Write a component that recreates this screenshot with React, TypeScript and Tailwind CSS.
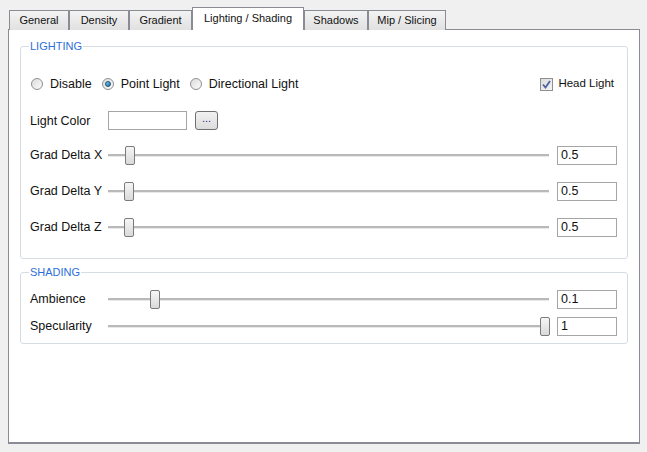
const tabs = [
  { label: "General", w: 60 },
  { label: "Density", w: 60 },
  { label: "Gradient", w: 63 },
  { label: "Lighting / Shading", w: 112, active: true },
  { label: "Shadows", w: 64 },
  { label: "Mip / Slicing", w: 78 },
];

function Radio({ checked, label }: { checked?: boolean; label: string }) {
  return (
    <label className="flex items-center gap-[7px]">
      <span className="flex h-[12px] w-[12px] items-center justify-center rounded-full border border-[#8f8f8f] bg-gradient-to-br from-[#dcdcdc] to-[#fbfbfb]">
        {checked && (
          <span className="h-[6px] w-[6px] rounded-full border border-[#1b4f72] bg-gradient-to-br from-[#7fd0f5] to-[#1a6fa8]" />
        )}
      </span>
      <span>{label}</span>
    </label>
  );
}

function Slider({ pos }: { pos: number }) {
  return (
    <div className="relative h-[19px] flex-1">
      <div className="absolute left-0 right-0 top-[8px] h-[3px] border-t-2 border-[#b9b9b9] bg-[#e8e8e8]" />
      <div
        className="absolute top-0 h-[19px] w-[10px] rounded-[2px] border border-[#7b7b7b] bg-gradient-to-b from-[#f6f6f6] to-[#d9d9d9]"
        style={{ left: pos }}
      />
    </div>
  );
}

function ValueBox({ value }: { value: string }) {
  return (
    <div className="flex h-[19px] w-[60px] items-center border border-[#a5a5a5] bg-white pl-[3px]">
      {value}
    </div>
  );
}

function SliderRow({ label, pos, value, h }: { label: string; pos: number; value: string; h: string }) {
  return (
    <div className={`flex items-center pl-[9px] pr-[10px] ${h}`}>
      <span className="w-[78px]">{label}</span>
      <Slider pos={pos} />
      <span className="w-[8px]" />
      <ValueBox value={value} />
    </div>
  );
}

function GroupBox({ title, className, children }: { title: string; className: string; children: React.ReactNode }) {
  return (
    <div className={`relative mx-[11px] rounded-[3px] border border-[#d5dde3] ${className}`}>
      <span className="absolute left-[8px] top-[-8px] bg-white px-[1px] text-[11px] leading-[14px] text-[#2c6ed8]">
        {title}
      </span>
      {children}
    </div>
  );
}

export default function App() {
  return (
    <div
      className="h-[452px] w-[647px] bg-[#f0f0f0] pl-[8px] pt-[7px] text-[12.5px] text-[#111]"
      style={{ fontFamily: '"Liberation Sans", Arial, sans-serif' }}
    >
      <div className="flex h-[23px] items-end pl-[1px]">
        {tabs.map((t) =>
          t.active ? (
            <div
              key={t.label}
              className="relative z-10 flex h-[23px] items-center justify-center border border-b-0 border-[#898c95] bg-white pb-[2px] text-[11px]"
              style={{ width: t.w }}
            >
              {t.label}
            </div>
          ) : (
            <div
              key={t.label}
              className="flex h-[20px] items-center justify-center border border-b-0 border-[#898c95] bg-gradient-to-b from-[#f3f3f3] to-[#e1e1e1] text-[11px]"
              style={{ width: t.w }}
            >
              {t.label}
            </div>
          )
        )}
      </div>
      <div className="-mt-px h-[415px] w-[632px] border border-[#898c95] border-b-2 bg-white pt-[16px]">
        <GroupBox title="LIGHTING" className="h-[213px] pt-[25px]">
          <div className="flex h-[24px] items-center pl-[10px] pr-[13px]">
            <div className="flex items-center gap-[10px]">
              <Radio label="Disable" />
              <Radio label="Point Light" checked />
              <Radio label="Directional Light" />
            </div>
            <div className="flex-1" />
            <label className="flex items-center gap-[5px] text-[11.5px]">
              <span className="flex h-[13px] w-[13px] items-center justify-center border border-[#8f8f8f] bg-gradient-to-br from-[#dcdcdc] to-[#f4f4f4]">
                <svg width="9" height="9" viewBox="0 0 9 9">
                  <path d="M1 4.5 L3.5 7.5 L8 1" fill="none" stroke="#4d62a0" strokeWidth="1.8" />
                </svg>
              </span>
              <span>Head Light</span>
            </label>
          </div>
          <div className="mt-[12px] flex h-[24px] items-center pl-[9px]">
            <span className="w-[78px] pt-[2px]">Light Color</span>
            <div className="h-[19px] w-[79px] border border-[#a5a5a5] bg-white" />
            <button className="ml-[8px] flex h-[19px] w-[23px] items-center justify-center rounded-[3px] border border-[#707070] bg-gradient-to-b from-[#f2f2f2] to-[#dcdcdc] pb-[4px] text-[11px] text-[#1f2a8a]">
              ...
            </button>
          </div>
          <div className="mt-[11px] flex flex-col gap-[12px]">
            <SliderRow label="Grad Delta X" pos={17} value="0.5" h="h-[24px]" />
            <SliderRow label="Grad Delta Y" pos={16} value="0.5" h="h-[24px]" />
            <SliderRow label="Grad Delta Z" pos={16} value="0.5" h="h-[24px]" />
          </div>
        </GroupBox>
        <GroupBox title="SHADING" className="mt-[13px] h-[72px] pt-[15px]">
          <div className="flex flex-col gap-[5px]">
            <SliderRow label="Ambience" pos={42} value="0.1" h="h-[22px]" />
            <SliderRow label="Specularity" pos={432} value="1" h="h-[22px]" />
          </div>
        </GroupBox>
      </div>
    </div>
  );
}
